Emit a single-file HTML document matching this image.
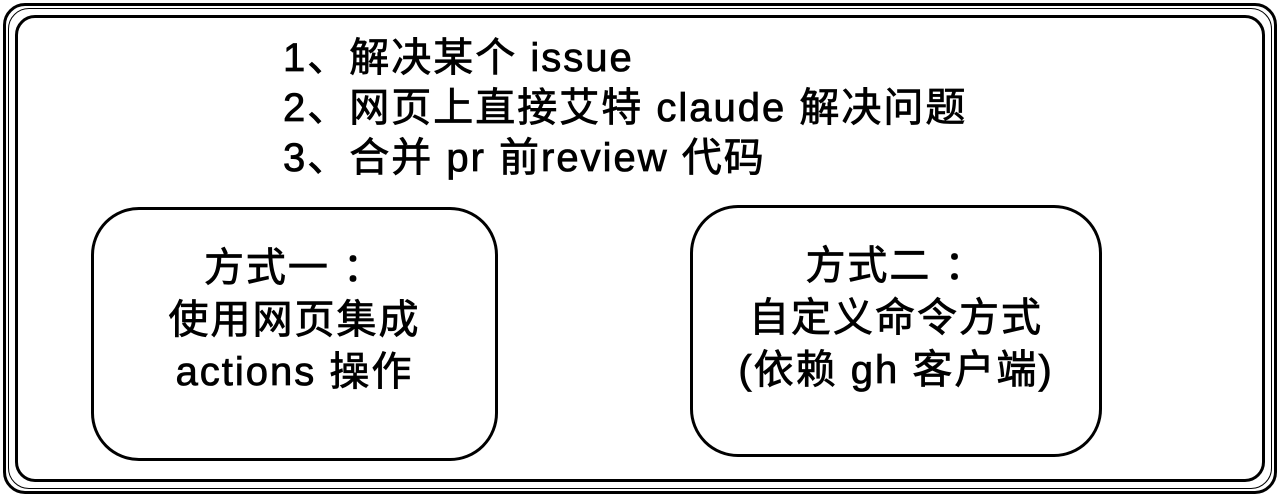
<!DOCTYPE html>
<html><head><meta charset="utf-8"><style>
html,body{margin:0;padding:0;background:#fff;width:1280px;height:497px;overflow:hidden;position:relative;font-family:"Liberation Sans","Noto Sans CJK SC",sans-serif;color:#000}
.b{position:absolute;box-sizing:border-box}
.t{position:absolute;font-size:40px;line-height:50px;white-space:nowrap;letter-spacing:2px;-webkit-text-stroke:0.8px #000}
.c{position:absolute;font-size:40px;line-height:52px;text-align:center;white-space:nowrap;letter-spacing:2px;-webkit-text-stroke:0.8px #000}
</style></head><body>
<div class="b" style="left:3px;top:3px;width:1274px;height:491px;border:3px solid #000;border-radius:22px"></div>
<div class="b" style="left:15px;top:15px;width:1250px;height:467px;border:3px solid #000;border-radius:20px"></div>
<div class="b" style="left:8px;top:8px;width:1264px;height:481px;border:1px solid #000;border-radius:21px"></div>
<div class="t" style="left:283px;top:33px">1、解决某个 issue</div>
<div class="t" style="left:283px;top:83px">2、网页上直接艾特 claude 解决问题</div>
<div class="t" style="left:283px;top:133px">3、合并 pr 前review 代码</div>
<div class="b" style="left:91px;top:207px;width:407px;height:254px;border:3px solid #000;border-radius:48px"></div>
<div class="b" style="left:690px;top:205px;width:412px;height:252px;border:3px solid #000;border-radius:48px"></div>
<div class="c" style="left:91px;width:407px;top:242px">方式一 ：<br>使用网页集成<br>actions 操作</div>
<div class="c" style="left:690px;width:412px;top:240px">方式二 ：<br>自定义命令方式<br>(依赖 gh 客户端)</div>
</body></html>
